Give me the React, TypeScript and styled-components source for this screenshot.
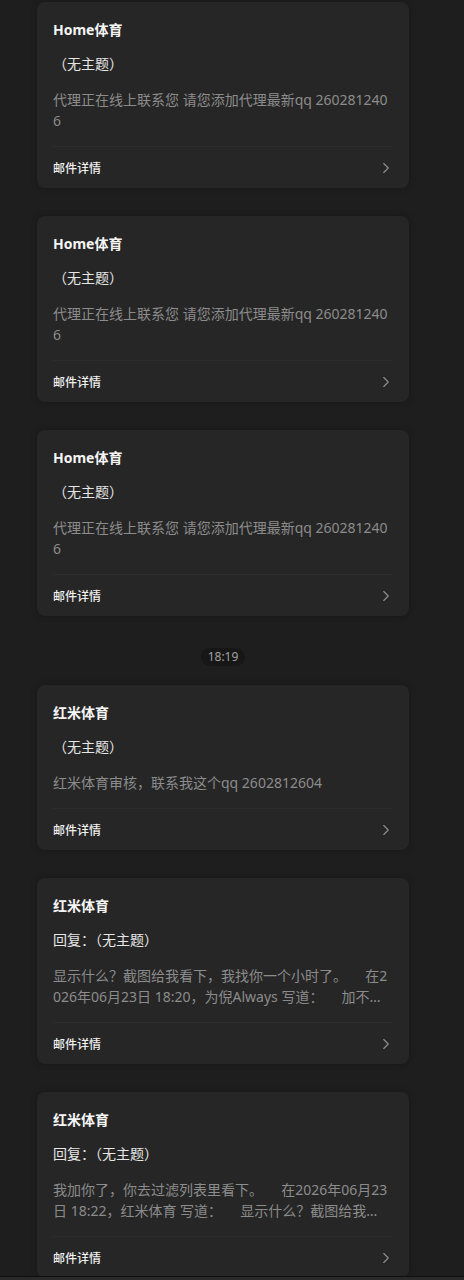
import { createGlobalStyle } from 'styled-components';
import styled from 'styled-components';
import { ChevronRight } from 'lucide-react';

const GlobalStyle = createGlobalStyle`
  html, body {
    margin: 0;
    padding: 0;
    background: #1e1e1e;
  }
  body {
    font-family: "Noto Sans", "Noto Sans CJK SC", sans-serif;
    -webkit-font-smoothing: antialiased;
  }
`;

type Mail = {
  from: string;
  subject: string;
  body: string;
};

type Item = { kind: 'mail'; mail: Mail } | { kind: 'time'; label: string };

const gap = '\u00a0\u00a0\u00a0\u00a0\u00a0';

const agent: Mail = {
  from: 'Home体育',
  subject: '（无主题）',
  body: '代理正在线上联系您 请您添加代理最新qq 2602812406',
};

const items: Item[] = [
  { kind: 'mail', mail: agent },
  { kind: 'mail', mail: agent },
  { kind: 'mail', mail: agent },
  { kind: 'time', label: '18:19' },
  {
    kind: 'mail',
    mail: {
      from: '红米体育',
      subject: '（无主题）',
      body: '红米体育审核，联系我这个qq 2602812604',
    },
  },
  {
    kind: 'mail',
    mail: {
      from: '红米体育',
      subject: '回复：（无主题）',
      body: `显示什么？截图给我看下，我找你一个小时了。${gap}在2026年06月23日 18:20，为倪Always 写道：${gap}加不了啊，你那边显示什么？`,
    },
  },
  {
    kind: 'mail',
    mail: {
      from: '红米体育',
      subject: '回复：（无主题）',
      body: `我加你了，你去过滤列表里看下。${gap}在2026年06月23日 18:22，红米体育 写道：${gap}显示什么？截图给我看下，我找你一个小时了。`,
    },
  },
];

const Screen = styled.div`
  display: flex;
  flex-direction: column;
  height: 100vh;
  overflow: hidden;
`;

const Feed = styled.div`
  flex: 1;
  min-height: 0;
  overflow: hidden;
  display: flex;
  flex-direction: column;
  gap: 28px;
  padding: 2px 55px 0 37px;
`;

const BottomBar = styled.div`
  flex: none;
  height: 3px;
  border-top: 1px solid #0f0f0f;
  background: #2a2a2a;
`;

const Card = styled.div`
  flex: none;
  background: #262626;
  border-radius: 8px;
  box-shadow: 0 0 6px rgba(0, 0, 0, 0.25);
  padding: 0 18px 0 16px;
`;

const From = styled.div`
  padding-top: 17px;
  font-size: 14px;
  line-height: 22px;
  font-weight: 700;
  color: #f5f5f5;
`;

const Subject = styled.div`
  margin-top: 12px;
  font-size: 14px;
  line-height: 22px;
  color: #e6e6e6;
`;

const Body = styled.div`
  margin-top: 14px;
  font-size: 14px;
  line-height: 21px;
  color: #8c8c8c;
  word-break: break-all;
  display: -webkit-box;
  -webkit-line-clamp: 2;
  -webkit-box-orient: vertical;
  overflow: hidden;
`;

const Footer = styled.div`
  margin-top: 15px;
  height: 41px;
  border-top: 1px solid #2d2d2d;
  display: flex;
  align-items: center;
  justify-content: space-between;
  font-size: 12px;
  font-weight: 500;
  color: #f0f0f0;
`;

const Arrow = styled(ChevronRight)`
  color: #8f8f8f;
  margin-right: -4px;
`;

const TimeRow = styled.div`
  flex: none;
  display: flex;
  justify-content: center;
  margin: 4px 0 -9px;
`;

const TimePill = styled.span`
  padding: 0 7px;
  height: 18px;
  line-height: 18px;
  border-radius: 9px;
  background: #171717;
  color: #a0a0a0;
  font-size: 12px;
`;

const MailCard = ({ mail }: { mail: Mail }) => (
  <Card>
    <From>{mail.from}</From>
    <Subject>{mail.subject}</Subject>
    <Body>{mail.body}</Body>
    <Footer>
      <span>邮件详情</span>
      <Arrow size={18} strokeWidth={1.5} />
    </Footer>
  </Card>
);

export default function App() {
  return (
    <>
      <GlobalStyle />
      <Screen>
        <Feed>
          {items.map((item, i) =>
            item.kind === 'time' ? (
              <TimeRow key={i}>
                <TimePill>{item.label}</TimePill>
              </TimeRow>
            ) : (
              <MailCard key={i} mail={item.mail} />
            ),
          )}
        </Feed>
        <BottomBar />
      </Screen>
    </>
  );
}
